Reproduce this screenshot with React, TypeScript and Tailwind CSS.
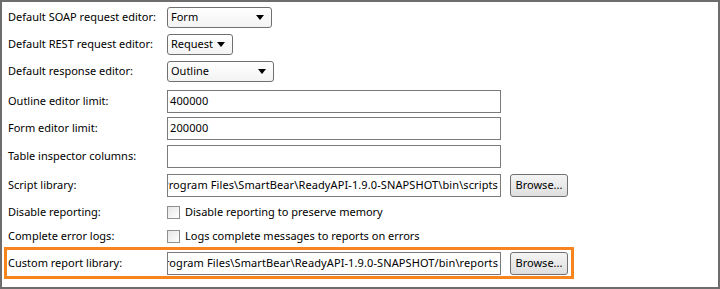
import type { ReactNode } from 'react'

const font = "font-['Segoe_UI','Noto_Sans','Open_Sans',sans-serif]"

function Select({ value, width }: { value: string; width: string }) {
  return (
    <div
      className={`${width} h-[21px] flex items-center justify-between pl-[3px] pr-[7px] border border-[#707070] rounded-[3px] bg-gradient-to-b from-[#ffffff] to-[#f3f3f3] text-black whitespace-nowrap`}
    >
      <span>{value}</span>
      <svg width="8" height="5" viewBox="0 0 8 5" className="shrink-0">
        <path d="M0 0 L8 0 L4 5 Z" fill="#000" />
      </svg>
    </div>
  )
}

function Field({ value = '', scroll = false }: { value?: string; scroll?: boolean }) {
  return (
    <div
      className={`w-[334px] h-[23px] flex items-center overflow-hidden whitespace-nowrap border border-[#7a7a7a] bg-white px-[2px] text-black ${scroll ? 'justify-end' : ''}`}
    >
      <span className="shrink-0 tracking-[0.1px]">{value}</span>
    </div>
  )
}

function Browse() {
  return (
    <button className="ml-[9px] w-[58px] h-[23px] flex items-center justify-center border border-[#707070] rounded-[3px] bg-gradient-to-b from-[#f4f4f4] to-[#dedede] text-black">
      Browse...
    </button>
  )
}

function Check({ label }: { label: string }) {
  return (
    <div className="flex items-center gap-[5px] whitespace-nowrap">
      <div className="w-[13px] h-[13px] border border-[#8e8f8f] bg-gradient-to-br from-[#e6e6e6] to-[#ffffff]" />
      <span>{label}</span>
    </div>
  )
}

function Row({ label, h, children }: { label: string; h: string; children: ReactNode }) {
  return (
    <div className={`flex items-center pl-[6px] ${h}`}>
      <div className="w-[159px] shrink-0 whitespace-nowrap">{label}</div>
      {children}
    </div>
  )
}

export default function App() {
  return (
    <div className={`${font} text-[11px] text-black w-[720px] h-[289px] border-2 border-[#6d6d6d] bg-white`}>
      <Row label="Default SOAP request editor:" h="h-[31px]">
        <Select value="Form" width="w-[105px]" />
      </Row>
      <Row label="Default REST request editor:" h="h-[23px]">
        <Select value="Request" width="w-[66px]" />
      </Row>
      <Row label="Default response editor:" h="h-[31px]">
        <Select value="Outline" width="w-[107px]" />
      </Row>
      <Row label="Outline editor limit:" h="h-[29px]">
        <Field value="400000" />
      </Row>
      <Row label="Form editor limit:" h="h-[25px]">
        <Field value="200000" />
      </Row>
      <Row label="Table inspector columns:" h="h-[31px]">
        <Field />
      </Row>
      <Row label="Script library:" h="h-[27px]">
        <Field value="C:\Program Files\SmartBear\ReadyAPI-1.9.0-SNAPSHOT\bin\scripts" scroll />
        <Browse />
      </Row>
      <Row label="Disable reporting:" h="h-[26px]">
        <Check label="Disable reporting to preserve memory" />
      </Row>
      <Row label="Complete error logs:" h="h-[22px]">
        <Check label="Logs complete messages to reports on errors" />
      </Row>
      <div className="ml-[2px] w-[570px] h-[32px] flex items-center pl-[1px] border-[3px] border-[#f7841f]">
        <div className="w-[159px] shrink-0 whitespace-nowrap">Custom report library:</div>
        <Field value="C:\Program Files\SmartBear\ReadyAPI-1.9.0-SNAPSHOT/bin\reports" scroll />
        <Browse />
      </div>
    </div>
  )
}
